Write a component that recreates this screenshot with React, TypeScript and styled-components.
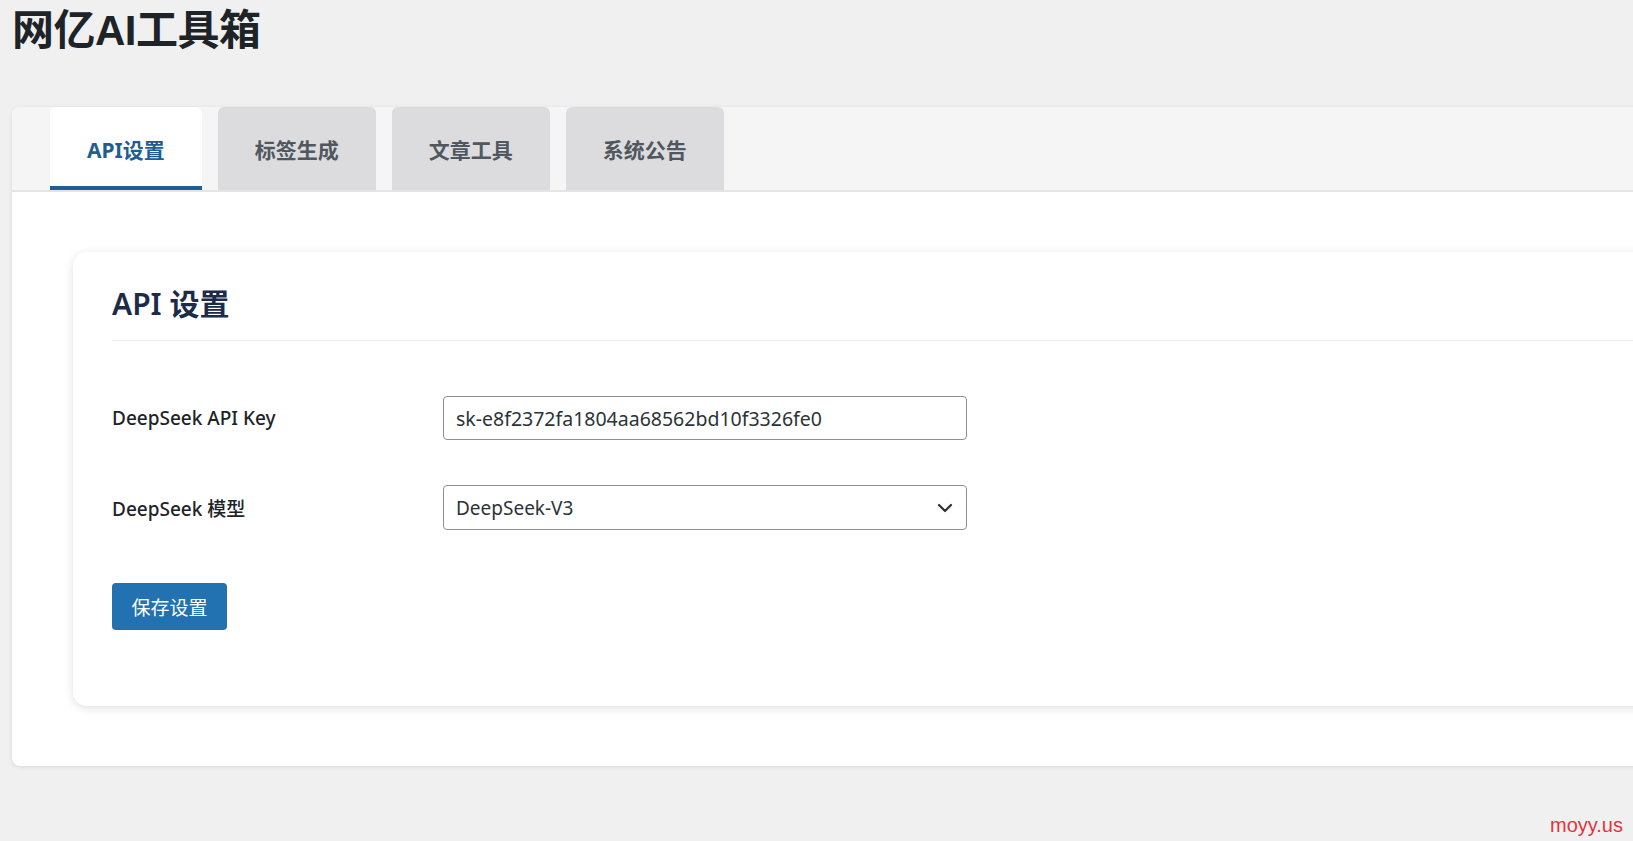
import * as React from 'react';
import styled, { createGlobalStyle } from 'styled-components';

const GlobalStyle = createGlobalStyle`
  html, body {
    margin: 0;
    padding: 0;
    background: #f0f0f1;
    overflow: hidden;
  }
  body {
    font-family: "Noto Sans", "Noto Sans CJK SC", sans-serif;
    color: #1d2327;
  }
`;

const Page = styled.div`
  position: relative;
  min-height: 841px;
  padding: 6px 0 0 12px;
  box-sizing: border-box;
`;

const Title = styled.h1`
  margin: 0;
  font-family: "Liberation Sans", "Noto Sans CJK SC", sans-serif;
  font-size: 42px;
  font-weight: 700;
  line-height: 50px;
  color: #1d2327;
  letter-spacing: -0.5px;
`;

const Panel = styled.div`
  margin-top: 51px;
  margin-right: -60px;
  background: #fff;
  border-radius: 8px;
  box-shadow: 0 1px 4px rgba(0, 0, 0, 0.1);
  overflow: hidden;
`;

const TabBar = styled.div`
  display: flex;
  gap: 16px;
  padding-left: 38px;
  background: #f5f5f5;
  border-bottom: 2px solid #e4e4e4;
`;

const Tab = styled.button<{ $active?: boolean }>`
  height: 83px;
  padding: 0 37px;
  border: none;
  border-radius: 6px 6px 0 0;
  font-family: "Noto Sans", "Noto Sans CJK SC", sans-serif;
  font-size: 21px;
  font-weight: 700;
  cursor: pointer;
  background: ${(p) => (p.$active ? '#fff' : '#dcdcde')};
  color: ${(p) => (p.$active ? '#1f5d92' : '#50575e')};
  box-shadow: ${(p) => (p.$active ? 'inset 0 -4px 0 #1f5d92' : 'none')};
`;

const Content = styled.div`
  padding: 60px 0 60px 61px;
`;

const Card = styled.div`
  background: #fff;
  border-radius: 14px;
  box-shadow: 0 2px 10px rgba(0, 0, 0, 0.13);
  padding: 30px 0 76px 39px;
`;

const CardTitle = styled.h2`
  margin: 0;
  padding-bottom: 14px;
  font-size: 30px;
  font-weight: 600;
  line-height: 44px;
  color: #1d2b4a;
  border-bottom: 1px solid #eeeeee;
`;

const Form = styled.div`
  display: flex;
  flex-direction: column;
  gap: 45px;
  padding-top: 55px;
`;

const Row = styled.div`
  display: flex;
  align-items: center;
`;

const Label = styled.label`
  width: 331px;
  flex-shrink: 0;
  font-size: 19px;
  font-weight: 500;
  color: #1d2327;
`;

const Input = styled.input`
  width: 524px;
  height: 44px;
  box-sizing: border-box;
  padding: 0 12px;
  border: 1px solid #8c8f94;
  border-radius: 4px;
  font-family: "Noto Sans", "Noto Sans CJK SC", sans-serif;
  font-size: 19.5px;
  color: #2c3338;
  outline: none;
`;

const SelectBox = styled.div`
  position: relative;
  width: 524px;
  height: 45px;
  svg {
    position: absolute;
    right: 14px;
    top: 50%;
    transform: translateY(-50%);
    pointer-events: none;
  }
`;

const Select = styled.select`
  width: 100%;
  height: 100%;
  box-sizing: border-box;
  padding: 0 40px 0 12px;
  appearance: none;
  background: #fff;
  border: 1px solid #8c8f94;
  border-radius: 4px;
  font-family: "Noto Sans", "Noto Sans CJK SC", sans-serif;
  font-size: 19px;
  color: #2c3338;
  outline: none;
`;

const SaveButton = styled.button`
  margin-top: 53px;
  width: 115px;
  height: 47px;
  border: none;
  border-radius: 4px;
  background: #2271b1;
  color: #fff;
  font-family: "Noto Sans CJK SC", sans-serif;
  font-size: 19px;
  cursor: pointer;
`;

const Watermark = styled.div`
  position: absolute;
  right: 10px;
  bottom: 4px;
  font-family: "Liberation Sans", Arial, sans-serif;
  font-size: 20px;
  color: #e2353b;
`;

const tabs = ['API设置', '标签生成', '文章工具', '系统公告'];

const App: React.FC = () => {
  const [active, setActive] = React.useState(0);
  const [apiKey, setApiKey] = React.useState('sk-e8f2372fa1804aa68562bd10f3326fe0');
  const [model, setModel] = React.useState('deepseek-v3');

  return (
    <>
      <GlobalStyle />
      <Page>
        <Title>网亿AI工具箱</Title>
        <Panel>
          <TabBar>
            {tabs.map((t, i) => (
              <Tab key={t} $active={i === active} onClick={() => setActive(i)}>
                {t}
              </Tab>
            ))}
          </TabBar>
          <Content>
            <Card>
              <CardTitle>API 设置</CardTitle>
              <Form>
                <Row>
                  <Label>DeepSeek API Key</Label>
                  <Input value={apiKey} onChange={(e) => setApiKey(e.target.value)} />
                </Row>
                <Row>
                  <Label>DeepSeek 模型</Label>
                  <SelectBox>
                    <Select value={model} onChange={(e) => setModel(e.target.value)}>
                      <option value="deepseek-v3">DeepSeek-V3</option>
                      <option value="deepseek-r1">DeepSeek-R1</option>
                    </Select>
                    <svg width="16" height="10" viewBox="0 0 16 10" fill="none">
                      <path d="M2 2l6 6 6-6" stroke="#2c3338" strokeWidth="2.2" strokeLinecap="round" strokeLinejoin="round" />
                    </svg>
                  </SelectBox>
                </Row>
              </Form>
              <SaveButton>保存设置</SaveButton>
            </Card>
          </Content>
        </Panel>
        <Watermark>moyy.us</Watermark>
      </Page>
    </>
  );
};

export default App;
